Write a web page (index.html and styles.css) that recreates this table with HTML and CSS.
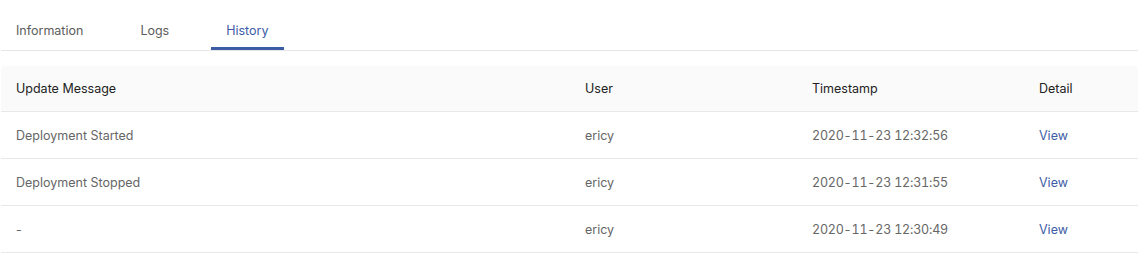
FILE: index.html
```html
<!DOCTYPE html>
<html lang="en">
<head>
<meta charset="utf-8">
<title>History</title>
<link rel="stylesheet" href="styles.css">
</head>
<body>
<div class="page">
  <nav class="tabs">
    <div class="tab">Information</div>
    <div class="tab">Logs</div>
    <div class="tab active">History</div>
  </nav>
  <table class="history">
    <thead>
      <tr>
        <th class="c-msg">Update Message</th>
        <th class="c-user">User</th>
        <th class="c-time">Timestamp</th>
        <th class="c-detail">Detail</th>
      </tr>
    </thead>
    <tbody>
      <tr>
        <td>Deployment Started</td>
        <td>ericy</td>
        <td class="num">2020-11-23 12:32:56</td>
        <td><a class="link" href="#">View</a></td>
      </tr>
      <tr>
        <td>Deployment Stopped</td>
        <td>ericy</td>
        <td class="num">2020-11-23 12:31:55</td>
        <td><a class="link" href="#">View</a></td>
      </tr>
      <tr>
        <td>-</td>
        <td>ericy</td>
        <td class="num">2020-11-23 12:30:49</td>
        <td><a class="link" href="#">View</a></td>
      </tr>
    </tbody>
  </table>
</div>
</body>
</html>
```
FILE: styles.css
```css
html, body {
  margin: 0;
  padding: 0;
  background: #ffffff;
}
body {
  font-family: Inter, "Liberation Sans", sans-serif;
  font-size: 12.5px;
  color: #666666;
}
.page {
  width: 1137px;
  padding-left: 1px;
}
.tabs {
  display: flex;
  gap: 27px;
  height: 50px;
  border-bottom: 1px solid #e6e6e6;
}
.tab {
  padding: 14px 15px 0;
  display: flex;
  align-items: center;
  box-sizing: border-box;
  height: 50px;
  color: #5c5c5c;
  border-bottom: 3px solid transparent;
}
.tab.active {
  color: #3d5ca6;
  border-bottom-color: #3d5ca6;
}
.history {
  margin-top: 15px;
  width: 1137px;
  border-collapse: separate;
  border-spacing: 0;
  table-layout: fixed;
}
.history th {
  background: #fafafa;
  color: #222222;
  font-weight: 400;
  text-align: left;
  height: 46px;
  padding: 0 15px 1px;
  border-bottom: 1px solid #e8e8e8;
  box-sizing: border-box;
}
.history th:first-child { border-top-left-radius: 4px; }
.history th:last-child { border-top-right-radius: 4px; }
.c-msg { width: 569px; }
.c-user { width: 227px; }
.c-time { width: 227px; }
.c-detail { width: 114px; }
.history td {
  height: 47px;
  padding: 0 15px;
  border-bottom: 1px solid #e8e8e8;
  box-sizing: border-box;
  color: #666666;
}
.num {
  font-variant-numeric: tabular-nums;
  letter-spacing: -0.2px;
}
.link {
  color: #3d5ca6;
  text-decoration: none;
}
```
